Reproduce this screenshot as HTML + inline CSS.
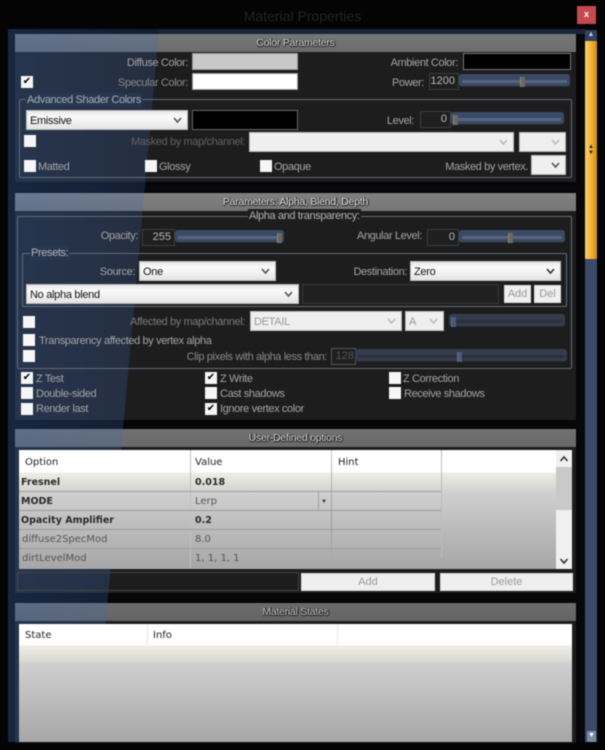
<!DOCTYPE html>
<html><head><meta charset="utf-8"><style>
html,body{margin:0;padding:0;background:#040405;width:605px;height:750px;overflow:hidden}
#r{position:relative;width:605px;height:750px;overflow:hidden;font:11px "Liberation Sans",sans-serif;color:#a4a4a4;filter:blur(.4px)}
#r div{position:absolute;box-sizing:border-box}
.p{left:15px;width:561px;background:#1d1d1e;box-shadow:0 0 3px #000}
.h{left:15px;width:561px;height:18px;background:linear-gradient(#747678,#6c6c6e)}
.t{left:15px;width:561px;text-align:center;color:#ddd;text-shadow:0 1px 1px #000,1px 0 1px #000;font-size:10.5px;line-height:18px;height:18px;letter-spacing:-.25px}
.g{border:1px solid #616c7a;border-radius:2px}
.l{white-space:nowrap;line-height:14px;height:14px;margin-top:1px;font-size:11px;letter-spacing:-.38px}
.r{text-align:right}
.d{color:#626262}
.cb{width:12px;height:12px;background:#f6f6f6;color:#000;font:bold 10px/11px "DejaVu Sans",sans-serif;text-align:center}
.s{background:linear-gradient(#e6e6e6,#fbfbfb 30%,#e4e4e4);color:#111;padding-left:3px;line-height:20px;font-size:11px;letter-spacing:-.3px;white-space:nowrap;border:1px solid #bbb}
.s svg{position:absolute;right:5px;top:6px}
.di{background:#efefef;color:#999}
.sw{border:1px solid #999}
.in{border:1px solid #3c3c3c;background:#1f1f20;color:#b8b8b8;text-align:right;padding-right:3px;line-height:15px;font-size:11px}
.sl{background:#3b4a64;border-radius:3px;height:13px;border-bottom:1px solid #252830}
.sl i{position:absolute;left:3px;right:3px;top:6px;height:3px;background:#56657f;display:block}
.sl b{position:absolute;top:3px;width:4px;height:10px;background:#6e675c;display:block;border-left:1px solid #8c8678}
.sl.o{background:#343c4e}.sl.o i{background:#2c3038}
.sl.o b{background:#4a5a78;border-color:#5d6d8c}
.btn{background:#efefef;color:#9a9a9a;text-align:center;border:1px solid #ddd;line-height:16px;font-size:11px}
.tb{font:10px "DejaVu Sans",sans-serif;color:#222;white-space:nowrap;line-height:14px;height:14px;margin-top:1px}
.tb.bd{font-weight:bold;font-size:9.5px;color:#2a2a2a}
.tb.m{color:#555}
.vl{width:1px;background:#a4a4a4}
.hl{height:1px;background:#9c9c9c}
</style></head><body><div id="r">

<div style="left:8px;top:29px;width:577px;height:713px;background:#08080a"></div>
<div class="p" style="top:34px;height:148px"></div>
<div class="h" style="top:34px"></div>
<div class="p" style="top:193px;height:227px"></div>
<div class="h" style="top:193px;background:linear-gradient(#808080,#767676)"></div>
<div class="p" style="top:429px;height:164px"></div>
<div class="h" style="top:429px;background:linear-gradient(#727272,#686868)"></div>
<div class="p" style="top:603px;height:140px"></div>
<div class="h" style="top:603px;background:linear-gradient(#6c6c6c,#646464)"></div>

<div style="left:8px;top:29px;width:577px;height:713px;background:linear-gradient(90deg,rgba(60,105,180,.32),rgba(60,105,180,.22) 160px);clip-path:polygon(0 0,151px 0,87px 713px,0 713px)"></div>
<div style="left:159px;top:29px;width:426px;height:5px;background:#1a2638"></div>

<div class="l" style="left:0;width:605px;top:7px;height:18px;line-height:18px;text-align:center;color:#242424;font-size:14px;letter-spacing:0;margin:0">Material Properties</div>
<div style="left:577px;top:6px;width:19px;height:18px;background:#c44a50;color:#fff;font:bold 9px/17px 'Liberation Sans',sans-serif;text-align:center">x</div>

<!-- main scrollbar -->
<div style="left:585px;top:30px;width:12px;height:712px;background:#3a4a68"></div>
<div style="left:585px;top:30px;width:12px;height:11px;background:#32415e;color:#ccd;font-size:7px;line-height:10px;text-align:center">▲</div>
<div style="left:585px;top:41px;width:12px;height:218px;background:linear-gradient(90deg,#fbd070,#f2b030 55%,#cf8a14)"></div>
<div style="left:585px;top:144px;width:12px;height:12px;color:#222;font-size:6px;line-height:6px;text-align:center">▲<br>▼</div>
<div style="left:587px;top:731px;width:9px;height:11px;background:#7d8aa2;color:#fff;font-size:7px;line-height:10px;text-align:center">▼</div>

<div class="t" style="top:34px">Color Parameters</div>
<div class="l r" style="left:60px;width:128px;top:55px">Diffuse Color:</div>
<div class="sw" style="left:192px;top:53px;width:106px;height:17px;background:#c8c8c8"></div>
<div class="cb" style="left:21px;top:76px">✔</div>
<div class="l r" style="left:60px;width:128px;top:75px;color:#8a8a8a">Specular Color:</div>
<div class="sw" style="left:192px;top:73px;width:106px;height:17px;background:#fff"></div>
<div class="l r" style="left:330px;width:128px;top:55px">Ambient Color:</div>
<div class="sw" style="left:463px;top:53px;width:108px;height:17px;background:#000;border-color:#777"></div>
<div class="l r" style="left:330px;width:94px;top:75px">Power:</div>
<div class="in" style="left:429px;top:73px;width:30px;height:17px">1200</div>
<div class="sl" style="left:459px;top:74px;width:111px"><i></i><b style="left:61px"></b></div>

<div class="g" style="left:19px;top:99px;width:553px;height:79px"></div>
<div class="l" style="left:26px;top:92px;background:#28374f;padding:0 1px;color:#a8aeb8">Advanced Shader Colors</div>
<div class="s" style="left:26px;top:110px;width:162px;height:20px">Emissive<svg width="9" height="7"><path d="M1 1l3.5 4L8 1" fill="none" stroke="#555" stroke-width="1.6"/></svg></div>
<div class="sw" style="left:192px;top:110px;width:106px;height:20px;background:#000;border-color:#666"></div>
<div class="l r" style="left:330px;width:84px;top:113px">Level:</div>
<div class="in" style="left:420px;top:111px;width:31px;height:17px">0</div>
<div class="sl" style="left:450px;top:112px;width:114px"><i></i><b style="left:3px"></b></div>
<div class="cb" style="left:24px;top:135px"></div>
<div class="l r d" style="left:100px;width:145px;top:134px">Masked by map/channel:</div>
<div class="s di" style="left:249px;top:132px;width:265px;height:20px"><svg width="9" height="7"><path d="M1 1l3.5 4L8 1" fill="none" stroke="#bbb" stroke-width="1.6"/></svg></div>
<div class="s di" style="left:519px;top:132px;width:47px;height:20px"><svg width="9" height="7"><path d="M1 1l3.5 4L8 1" fill="none" stroke="#bbb" stroke-width="1.6"/></svg></div>
<div class="cb" style="left:24px;top:160px"></div><div class="l" style="left:38px;top:159px">Matted</div>
<div class="cb" style="left:145px;top:160px"></div><div class="l" style="left:159px;top:159px">Glossy</div>
<div class="cb" style="left:260px;top:160px"></div><div class="l" style="left:274px;top:159px">Opaque</div>
<div class="l r" style="left:400px;width:128px;top:159px">Masked by vertex.</div>
<div class="s di" style="left:531px;top:155px;width:35px;height:20px"><svg width="9" height="7"><path d="M1 1l3.5 4L8 1" fill="none" stroke="#555" stroke-width="1.6"/></svg></div>

<div class="t" style="top:193px;color:#e8e8e8">Parameters: Alpha, Blend, Depth</div>
<div class="g" style="left:17px;top:216px;width:555px;height:153px"></div>
<div class="l" style="left:248px;top:208px;background:#1d1d1e;padding:0 1px;color:#b4b4b4">Alpha and transparency:</div>
<div class="l r" style="left:60px;width:78px;top:228px">Opacity:</div>
<div class="in" style="left:142px;top:229px;width:33px;height:17px">255</div>
<div class="sl" style="left:175px;top:230px;width:109px"><i></i><b style="left:102px"></b></div>
<div class="l r" style="left:330px;width:92px;top:228px">Angular Level:</div>
<div class="in" style="left:427px;top:229px;width:32px;height:17px">0</div>
<div class="sl" style="left:459px;top:230px;width:106px"><i></i><b style="left:49px"></b></div>

<div class="g" style="left:22px;top:253px;width:545px;height:54px"></div>
<div class="l" style="left:30px;top:245px;background:#28374f;padding:0 1px;color:#b0b4bc">Presets:</div>
<div class="l r" style="left:60px;width:75px;top:264px">Source:</div>
<div class="s" style="left:139px;top:261px;width:137px;height:20px">One<svg width="9" height="7"><path d="M1 1l3.5 4L8 1" fill="none" stroke="#555" stroke-width="1.6"/></svg></div>
<div class="l r" style="left:300px;width:107px;top:264px">Destination:</div>
<div class="s" style="left:410px;top:261px;width:151px;height:20px">Zero<svg width="9" height="7"><path d="M1 1l3.5 4L8 1" fill="none" stroke="#333" stroke-width="1.6"/></svg></div>
<div class="s" style="left:26px;top:284px;width:273px;height:20px">No alpha blend<svg width="9" height="7"><path d="M1 1l3.5 4L8 1" fill="none" stroke="#555" stroke-width="1.6"/></svg></div>
<div style="left:302px;top:284px;width:197px;height:20px;border:1px solid #3a3a3a;background:#202020"></div>
<div class="btn" style="left:504px;top:285px;width:27px;height:18px">Add</div>
<div class="btn" style="left:534px;top:285px;width:27px;height:18px">Del</div>

<div class="cb" style="left:23px;top:316px"></div>
<div class="l r d" style="left:100px;width:145px;top:314px;color:#7a7a7a">Affected by map/channel:</div>
<div class="s di" style="left:250px;top:311px;width:152px;height:20px">DETAIL<svg width="9" height="7"><path d="M1 1l3.5 4L8 1" fill="none" stroke="#bbb" stroke-width="1.6"/></svg></div>
<div class="s di" style="left:405px;top:311px;width:39px;height:20px">A<svg width="9" height="7"><path d="M1 1l3.5 4L8 1" fill="none" stroke="#bbb" stroke-width="1.6"/></svg></div>
<div class="sl o" style="left:449px;top:314px;width:116px"><i></i><b style="left:2px"></b></div>
<div class="cb" style="left:23px;top:334px"></div>
<div class="l" style="left:39px;top:333px">Transparency affected by vertex alpha</div>
<div class="cb" style="left:23px;top:350px"></div>
<div class="l r" style="left:120px;width:207px;top:349px;color:#8a8a8a">Clip pixels with alpha less than:</div>
<div class="in" style="left:331px;top:348px;width:25px;height:17px;color:#555;padding-right:1px;border-color:#555">128</div>
<div class="sl o" style="left:355px;top:349px;width:212px"><i></i><b style="left:102px"></b></div>

<div class="cb" style="left:21px;top:372px">✔</div><div class="l" style="left:36px;top:371px">Z Test</div>
<div class="cb" style="left:21px;top:387px"></div><div class="l" style="left:36px;top:386px">Double-sided</div>
<div class="cb" style="left:21px;top:403px"></div><div class="l" style="left:36px;top:401px">Render last</div>
<div class="cb" style="left:205px;top:372px">✔</div><div class="l" style="left:220px;top:371px">Z Write</div>
<div class="cb" style="left:205px;top:387px"></div><div class="l" style="left:220px;top:386px">Cast shadows</div>
<div class="cb" style="left:205px;top:403px">✔</div><div class="l" style="left:220px;top:401px">Ignore vertex color</div>
<div class="cb" style="left:389px;top:372px"></div><div class="l" style="left:403px;top:371px">Z Correction</div>
<div class="cb" style="left:389px;top:387px"></div><div class="l" style="left:404px;top:386px">Receive shadows</div>

<div class="t" style="top:429px">User-Defined options</div>
<div style="left:19px;top:450px;width:553px;height:119px;background:linear-gradient(#fff 0,#fff 22px,#efede6 23px,#dcdbd5 36px,#cfcfcf 43px,#a6a6a6 100%)"></div>
<div class="vl" style="left:190px;top:450px;height:118px;background:#c0c0c0"></div>
<div class="vl" style="left:331px;top:450px;height:108px;background:linear-gradient(#c8c8c8,#999 60%,#a8a8a8)"></div>
<div class="vl" style="left:441px;top:450px;height:108px;background:#bcbcbc"></div>
<div class="vl" style="left:318px;top:491px;height:19px"></div>
<div class="hl" style="left:19px;top:491px;width:422px"></div>
<div class="hl" style="left:19px;top:510px;width:422px"></div>
<div class="hl" style="left:19px;top:529px;width:422px"></div>
<div class="hl" style="left:19px;top:548px;width:422px"></div>
<div class="tb" style="left:25px;top:455px">Option</div>
<div class="tb" style="left:195px;top:455px">Value</div>
<div class="tb" style="left:338px;top:455px">Hint</div>
<div class="tb bd" style="left:21px;top:475px">Fresnel</div><div class="tb bd" style="left:195px;top:475px">0.018</div>
<div class="tb bd" style="left:21px;top:494px">MODE</div><div class="tb m" style="left:195px;top:494px">Lerp</div>
<div class="l" style="left:321px;top:495px;color:#333;font-size:6px;line-height:13px">▼</div>
<div class="tb bd" style="left:21px;top:513px">Opacity Amplifier</div><div class="tb bd" style="left:195px;top:513px">0.2</div>
<div class="tb m" style="left:22px;top:532px">diffuse2SpecMod</div><div class="tb m" style="left:195px;top:532px">8.0</div>
<div class="tb m" style="left:22px;top:551px">dirtLevelMod</div><div class="tb m" style="left:195px;top:551px">1, 1, 1, 1</div>
<div style="left:556px;top:450px;width:16px;height:119px;background:#f0f0f0"></div>
<div style="left:556px;top:467px;width:16px;height:43px;background:#c9c9c9"></div>
<svg style="position:absolute;left:559px;top:455px" width="10" height="8"><path d="M1.5 6L5 2l3.5 4" fill="none" stroke="#333" stroke-width="1.6"/></svg>
<svg style="position:absolute;left:559px;top:557px" width="10" height="8"><path d="M1.5 2L5 6l3.5-4" fill="none" stroke="#333" stroke-width="1.6"/></svg>
<div style="left:17px;top:572px;width:282px;height:19px;border:1px solid #444"></div>
<div class="btn" style="left:301px;top:573px;width:134px;height:18px">Add</div>
<div class="btn" style="left:440px;top:573px;width:133px;height:18px">Delete</div>

<div class="t" style="top:603px;color:#ccc">Material States</div>
<div style="left:19px;top:624px;width:553px;height:118px;background:linear-gradient(#fff 0,#fff 21px,#efede6 22px,#dcdbd5 36px,#cfcfcf 41px,#a6a6a6 100%)"></div>
<div class="vl" style="left:147px;top:624px;height:21px;background:#e4e4e4"></div>
<div class="vl" style="left:337px;top:624px;height:21px;background:#e8e8e8"></div>
<div class="tb" style="left:25px;top:628px">State</div>
<div class="tb" style="left:153px;top:628px">Info</div>
</div></body></html>
